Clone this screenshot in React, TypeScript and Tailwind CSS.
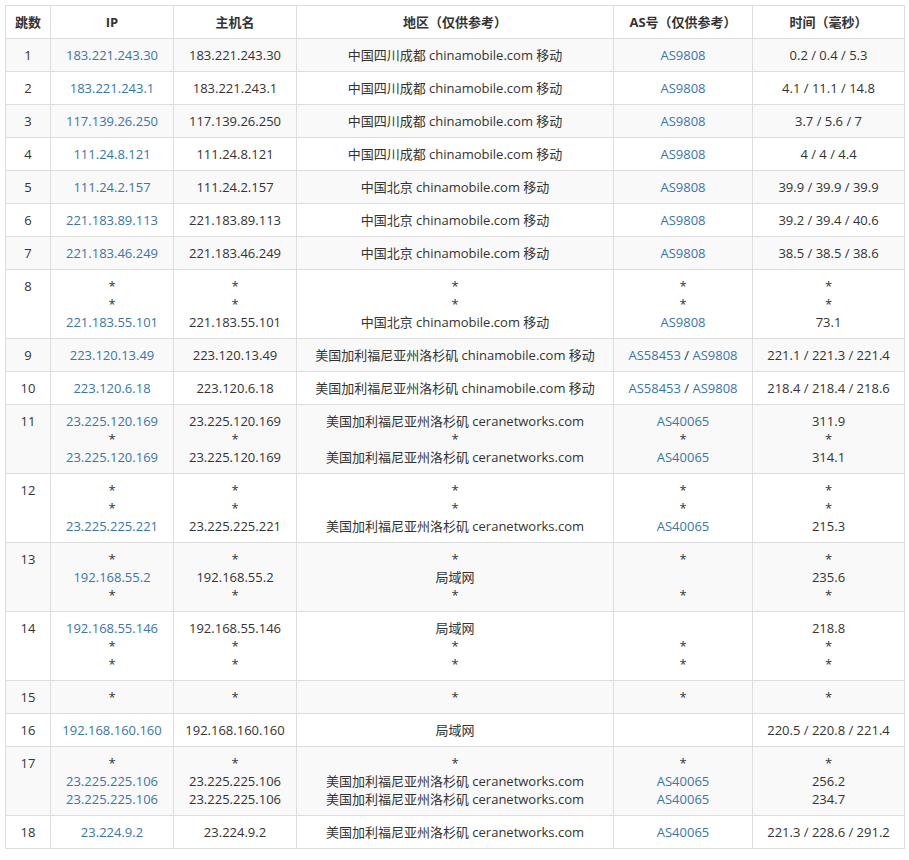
import React from "react";

type Row = { hop: string; ip: string[]; host: string[]; region: string[]; as: string[]; time: string[] };

const cm = (c: string) => `${c} chinamobile.com 移动`;
const sc = cm("中国四川成都");
const bj = cm("中国北京");
const us = cm("美国加利福尼亚州洛杉矶");
const ce = "美国加利福尼亚州洛杉矶 ceranetworks.com";

const rows: Row[] = [
  { hop: "1", ip: ["183.221.243.30"], host: ["183.221.243.30"], region: [sc], as: ["AS9808"], time: ["0.2 / 0.4 / 5.3"] },
  { hop: "2", ip: ["183.221.243.1"], host: ["183.221.243.1"], region: [sc], as: ["AS9808"], time: ["4.1 / 11.1 / 14.8"] },
  { hop: "3", ip: ["117.139.26.250"], host: ["117.139.26.250"], region: [sc], as: ["AS9808"], time: ["3.7 / 5.6 / 7"] },
  { hop: "4", ip: ["111.24.8.121"], host: ["111.24.8.121"], region: [sc], as: ["AS9808"], time: ["4 / 4 / 4.4"] },
  { hop: "5", ip: ["111.24.2.157"], host: ["111.24.2.157"], region: [bj], as: ["AS9808"], time: ["39.9 / 39.9 / 39.9"] },
  { hop: "6", ip: ["221.183.89.113"], host: ["221.183.89.113"], region: [bj], as: ["AS9808"], time: ["39.2 / 39.4 / 40.6"] },
  { hop: "7", ip: ["221.183.46.249"], host: ["221.183.46.249"], region: [bj], as: ["AS9808"], time: ["38.5 / 38.5 / 38.6"] },
  { hop: "8", ip: ["*", "*", "221.183.55.101"], host: ["*", "*", "221.183.55.101"], region: ["*", "*", bj], as: ["*", "*", "AS9808"], time: ["*", "*", "73.1"] },
  { hop: "9", ip: ["223.120.13.49"], host: ["223.120.13.49"], region: [us], as: ["AS58453 / AS9808"], time: ["221.1 / 221.3 / 221.4"] },
  { hop: "10", ip: ["223.120.6.18"], host: ["223.120.6.18"], region: [us], as: ["AS58453 / AS9808"], time: ["218.4 / 218.4 / 218.6"] },
  { hop: "11", ip: ["23.225.120.169", "*", "23.225.120.169"], host: ["23.225.120.169", "*", "23.225.120.169"], region: [ce, "*", ce], as: ["AS40065", "*", "AS40065"], time: ["311.9", "*", "314.1"] },
  { hop: "12", ip: ["*", "*", "23.225.225.221"], host: ["*", "*", "23.225.225.221"], region: ["*", "*", ce], as: ["*", "*", "AS40065"], time: ["*", "*", "215.3"] },
  { hop: "13", ip: ["*", "192.168.55.2", "*"], host: ["*", "192.168.55.2", "*"], region: ["*", "局域网", "*"], as: ["*", "", "*"], time: ["*", "235.6", "*"] },
  { hop: "14", ip: ["192.168.55.146", "*", "*"], host: ["192.168.55.146", "*", "*"], region: ["局域网", "*", "*"], as: ["", "*", "*"], time: ["218.8", "*", "*"] },
  { hop: "15", ip: ["*"], host: ["*"], region: ["*"], as: ["*"], time: ["*"] },
  { hop: "16", ip: ["192.168.160.160"], host: ["192.168.160.160"], region: ["局域网"], as: [""], time: ["220.5 / 220.8 / 221.4"] },
  { hop: "17", ip: ["*", "23.225.225.106", "23.225.225.106"], host: ["*", "23.225.225.106", "23.225.225.106"], region: ["*", ce, ce], as: ["*", "AS40065", "AS40065"], time: ["*", "256.2", "234.7"] },
  { hop: "18", ip: ["23.224.9.2"], host: ["23.224.9.2"], region: [ce], as: ["AS40065"], time: ["221.3 / 228.6 / 291.2"] },
];

const Lines = ({ items, link, as }: { items: string[]; link?: boolean; as?: boolean }) => (
  <>
    {items.map((t, i) => (
      <div key={i} className="h-[18px]">
        {t === "*" || t === "" ? (
          t
        ) : as ? (
          t.split(" / ").map((a, j) => (
            <React.Fragment key={j}>
              {j > 0 && " / "}
              <span className="text-[#3a75ad]">{a}</span>
            </React.Fragment>
          ))
        ) : link ? (
          <span className="text-[#3a75ad]">{t}</span>
        ) : (
          t
        )}
      </div>
    ))}
  </>
);

export default function App() {
  const td = "border border-[#dddddd] px-2 pt-[7px] pb-[7px] align-top text-center leading-[18px]";
  return (
    <div className="p-[5px] bg-white text-[13px] text-[#333]" style={{ fontFamily: '"Open Sans","Noto Sans CJK SC",sans-serif' }}>
      <table className="w-[899px] border-collapse table-fixed">
        <colgroup>
          <col className="w-[45px]" />
          <col className="w-[123px]" />
          <col className="w-[123px]" />
          <col className="w-[317px]" />
          <col className="w-[139px]" />
          <col className="w-[152px]" />
        </colgroup>
        <thead>
          <tr className="font-bold">
            {["跳数", "IP", "主机名", "地区（仅供参考）", "AS号（仅供参考）", "时间（毫秒）"].map((h) => (
              <th key={h} className={td}>{h}</th>
            ))}
          </tr>
        </thead>
        <tbody>
          {rows.map((r, i) => (
            <tr key={r.hop} className={i % 2 === 0 ? "bg-[#f9f9f9]" : "bg-white"}>
              <td className={td}>{r.hop}</td>
              <td className={td}><Lines items={r.ip} link /></td>
              <td className={td}><Lines items={r.host} /></td>
              <td className={td}><Lines items={r.region} /></td>
              <td className={td}><Lines items={r.as} as /></td>
              <td className={td}><Lines items={r.time} /></td>
            </tr>
          ))}
        </tbody>
      </table>
    </div>
  );
}
